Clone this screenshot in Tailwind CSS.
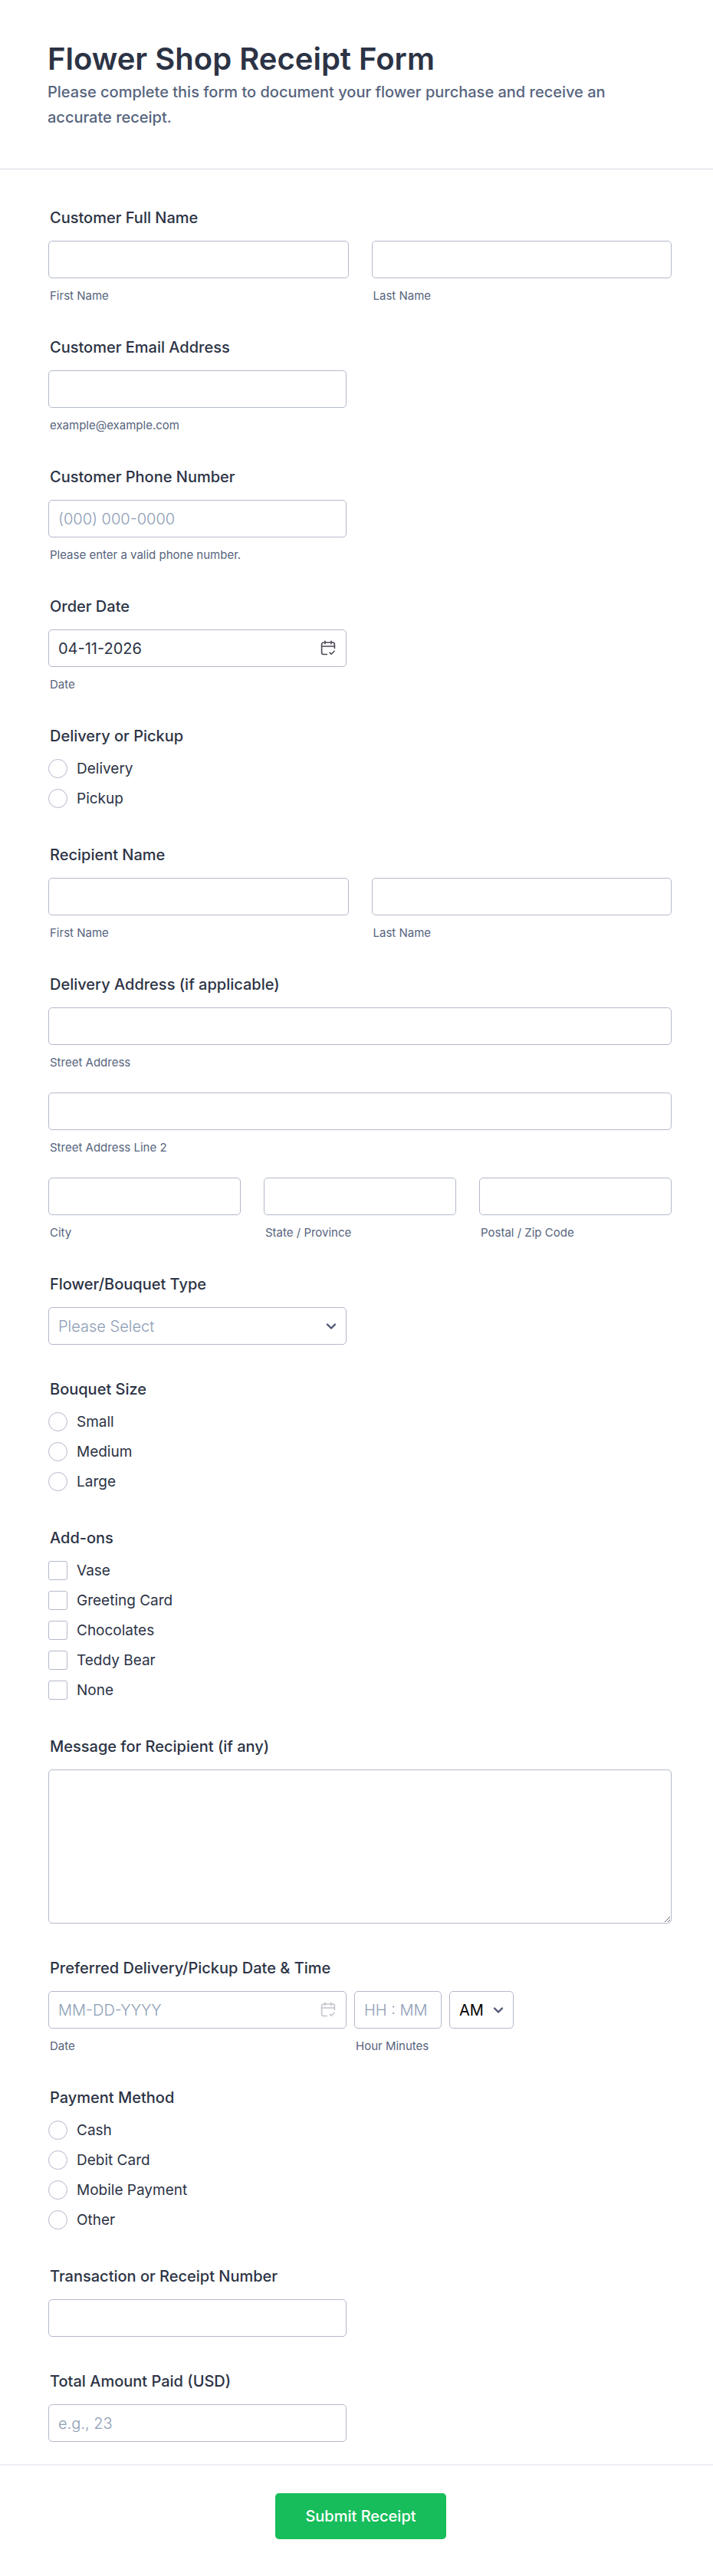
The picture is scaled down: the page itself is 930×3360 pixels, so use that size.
<!DOCTYPE html>
<html lang="en">

<head>
    <meta charset="UTF-8">
    <meta name="viewport" content="width=device-width, initial-scale=1.0">
    <script src="https://cdn.jsdelivr.net/npm/@tailwindcss/browser@4"></script>
    <title>Flower Shop Receipt Form</title>
</head>

<body class="bg-white font-['Inter',sans-serif] text-[#2c3345]">
    <form>
        <header class="border-b border-[#d7d8e1] pt-[52px] pb-[50px] pl-[62px] pr-20">
            <h1 class="text-[40px] leading-[50px] font-semibold">Flower Shop Receipt Form</h1>
            <p class="mt-0.5 text-xl leading-[33px] font-medium text-[#57647e]">Please complete this form to document your flower purchase and receive an accurate receipt.</p>
        </header>

        <div class="flex flex-col gap-[46px] pt-[51px] pb-[29px] pl-[63px] pr-[54px]">
            <!-- Customer name -->
            <fieldset>
                <legend class="mb-[18px] pl-0.5 text-xl leading-6 font-medium">Customer Full Name</legend>
                <div class="grid grid-cols-2 gap-[30px]">
                    <div>
                        <input type="text" id="first-name" class="block w-full h-[49px] px-3 text-xl border border-[#b4b9cc] rounded-[5px]">
                        <label for="first-name" class="block mt-[14px] pl-0.5 text-[15px] leading-[18px] text-[#57647e]">First Name</label>
                    </div>
                    <div>
                        <input type="text" id="last-name" class="block w-full h-[49px] px-3 text-xl border border-[#b4b9cc] rounded-[5px]">
                        <label for="last-name" class="block mt-[14px] pl-0.5 text-[15px] leading-[18px] text-[#57647e]">Last Name</label>
                    </div>
                </div>
            </fieldset>

            <!-- Email -->
            <div>
                <label for="email" class="block mb-[18px] pl-0.5 text-xl leading-6 font-medium">Customer Email Address</label>
                <input type="email" id="email" class="block w-full max-w-[389px] h-[49px] px-3 text-xl border border-[#b4b9cc] rounded-[5px]">
                <label for="email" class="block mt-[14px] pl-0.5 text-[15px] leading-[18px] text-[#57647e]">example@example.com</label>
            </div>

            <!-- Phone -->
            <div>
                <label for="phone" class="block mb-[18px] pl-0.5 text-xl leading-6 font-medium">Customer Phone Number</label>
                <input type="tel" id="phone" placeholder="(000) 000-0000" class="block w-full max-w-[389px] h-[49px] px-3 text-xl border border-[#b4b9cc] rounded-[5px] placeholder:text-[#8d9db5] placeholder:font-light">
                <label for="phone" class="block mt-[14px] pl-0.5 text-[15px] leading-[18px] text-[#57647e]">Please enter a valid phone number.</label>
            </div>

            <!-- Order date -->
            <div>
                <label for="order-date" class="block mb-[18px] pl-0.5 text-xl leading-6 font-medium">Order Date</label>
                <div class="relative max-w-[389px]">
                    <input type="text" id="order-date" value="04-11-2026" class="block w-full h-[49px] px-3 text-xl border border-[#b4b9cc] rounded-[5px]">
                    <svg class="absolute right-[14px] top-[14px] size-[20px] text-[#4f4759]" viewBox="0 0 20 20" fill="none" stroke="currentColor" stroke-width="1.6" stroke-linecap="round" stroke-linejoin="round">
                        <path d="M8.5 18.5H4a2.4 2.4 0 0 1-2.4-2.4V5.4A2.4 2.4 0 0 1 4 3h12a2.4 2.4 0 0 1 2.4 2.4v5.1" />
                        <path d="M1.6 8h16.8M6 1.2v3.6M14 1.2v3.6M12.2 16.4l1.9 1.9 4-4" />
                    </svg>
                </div>
                <label for="order-date" class="block mt-[14px] pl-0.5 text-[15px] leading-[18px] text-[#57647e]">Date</label>
            </div>

            <!-- Delivery or pickup -->
            <fieldset class="pb-[3px]">
                <legend class="mb-[18px] pl-0.5 text-xl leading-6 font-medium">Delivery or Pickup</legend>
                <div class="flex flex-col items-start gap-[14px]">
                    <label class="flex items-center gap-3 text-[19px] leading-[25px]"><input type="radio" name="method" class="appearance-none size-[25px] border border-[#b4b9cc] rounded-full checked:border-8 checked:border-blue-500">Delivery</label>
                    <label class="flex items-center gap-3 text-[19px] leading-[25px]"><input type="radio" name="method" class="appearance-none size-[25px] border border-[#b4b9cc] rounded-full checked:border-8 checked:border-blue-500">Pickup</label>
                </div>
            </fieldset>

            <!-- Recipient -->
            <fieldset>
                <legend class="mb-[18px] pl-0.5 text-xl leading-6 font-medium">Recipient Name</legend>
                <div class="grid grid-cols-2 gap-[30px]">
                    <div>
                        <input type="text" id="recipient-first" class="block w-full h-[49px] px-3 text-xl border border-[#b4b9cc] rounded-[5px]">
                        <label for="recipient-first" class="block mt-[14px] pl-0.5 text-[15px] leading-[18px] text-[#57647e]">First Name</label>
                    </div>
                    <div>
                        <input type="text" id="recipient-last" class="block w-full h-[49px] px-3 text-xl border border-[#b4b9cc] rounded-[5px]">
                        <label for="recipient-last" class="block mt-[14px] pl-0.5 text-[15px] leading-[18px] text-[#57647e]">Last Name</label>
                    </div>
                </div>
            </fieldset>

            <!-- Address -->
            <fieldset>
                <legend class="mb-[18px] pl-0.5 text-xl leading-6 font-medium">Delivery Address (if applicable)</legend>
                <div class="grid grid-cols-3 gap-[30px]">
                    <div class="col-span-3">
                        <input type="text" id="street" class="block w-full h-[49px] px-3 text-xl border border-[#b4b9cc] rounded-[5px]">
                        <label for="street" class="block mt-[14px] pl-0.5 text-[15px] leading-[18px] text-[#57647e]">Street Address</label>
                    </div>
                    <div class="col-span-3">
                        <input type="text" id="street-2" class="block w-full h-[49px] px-3 text-xl border border-[#b4b9cc] rounded-[5px]">
                        <label for="street-2" class="block mt-[14px] pl-0.5 text-[15px] leading-[18px] text-[#57647e]">Street Address Line 2</label>
                    </div>
                    <div>
                        <input type="text" id="city" class="block w-full h-[49px] px-3 text-xl border border-[#b4b9cc] rounded-[5px]">
                        <label for="city" class="block mt-[14px] pl-0.5 text-[15px] leading-[18px] text-[#57647e]">City</label>
                    </div>
                    <div>
                        <input type="text" id="state" class="block w-full h-[49px] px-3 text-xl border border-[#b4b9cc] rounded-[5px]">
                        <label for="state" class="block mt-[14px] pl-0.5 text-[15px] leading-[18px] text-[#57647e]">State / Province</label>
                    </div>
                    <div>
                        <input type="text" id="zip" class="block w-full h-[49px] px-3 text-xl border border-[#b4b9cc] rounded-[5px]">
                        <label for="zip" class="block mt-[14px] pl-0.5 text-[15px] leading-[18px] text-[#57647e]">Postal / Zip Code</label>
                    </div>
                </div>
            </fieldset>

            <!-- Flower type -->
            <div>
                <label for="flower-type" class="block mb-[18px] pl-0.5 text-xl leading-6 font-medium">Flower/Bouquet Type</label>
                <div class="relative max-w-[389px]">
                    <select id="flower-type" class="appearance-none block w-full h-[49px] px-3 text-xl font-light text-[#8d9db5] bg-white border border-[#b4b9cc] rounded-[5px]">
                        <option>Please Select</option>
                    </select>
                    <svg class="absolute right-[13px] top-[20px] w-[14px] h-[10px] text-[#4e5673] pointer-events-none" viewBox="0 0 14 10" fill="none" stroke="currentColor" stroke-width="2.4" stroke-linecap="round" stroke-linejoin="round">
                        <path d="M2 2.5l5 5 5-5" />
                    </svg>
                </div>
            </div>

            <!-- Bouquet size -->
            <fieldset class="pb-[3px]">
                <legend class="mb-[18px] pl-0.5 text-xl leading-6 font-medium">Bouquet Size</legend>
                <div class="flex flex-col items-start gap-[14px]">
                    <label class="flex items-center gap-3 text-[19px] leading-[25px]"><input type="radio" name="size" class="appearance-none size-[25px] border border-[#b4b9cc] rounded-full checked:border-8 checked:border-blue-500">Small</label>
                    <label class="flex items-center gap-3 text-[19px] leading-[25px]"><input type="radio" name="size" class="appearance-none size-[25px] border border-[#b4b9cc] rounded-full checked:border-8 checked:border-blue-500">Medium</label>
                    <label class="flex items-center gap-3 text-[19px] leading-[25px]"><input type="radio" name="size" class="appearance-none size-[25px] border border-[#b4b9cc] rounded-full checked:border-8 checked:border-blue-500">Large</label>
                </div>
            </fieldset>

            <!-- Add-ons -->
            <fieldset class="pb-[3px]">
                <legend class="mb-[18px] pl-0.5 text-xl leading-6 font-medium">Add-ons</legend>
                <div class="flex flex-col items-start gap-[14px]">
                    <label class="flex items-center gap-3 text-[19px] leading-[25px]"><input type="checkbox" class="appearance-none size-[25px] border border-[#b4b9cc] rounded-[3px] checked:bg-blue-500">Vase</label>
                    <label class="flex items-center gap-3 text-[19px] leading-[25px]"><input type="checkbox" class="appearance-none size-[25px] border border-[#b4b9cc] rounded-[3px] checked:bg-blue-500">Greeting Card</label>
                    <label class="flex items-center gap-3 text-[19px] leading-[25px]"><input type="checkbox" class="appearance-none size-[25px] border border-[#b4b9cc] rounded-[3px] checked:bg-blue-500">Chocolates</label>
                    <label class="flex items-center gap-3 text-[19px] leading-[25px]"><input type="checkbox" class="appearance-none size-[25px] border border-[#b4b9cc] rounded-[3px] checked:bg-blue-500">Teddy Bear</label>
                    <label class="flex items-center gap-3 text-[19px] leading-[25px]"><input type="checkbox" class="appearance-none size-[25px] border border-[#b4b9cc] rounded-[3px] checked:bg-blue-500">None</label>
                </div>
            </fieldset>

            <!-- Message -->
            <div>
                <label for="message" class="block mb-[18px] pl-0.5 text-xl leading-6 font-medium">Message for Recipient (if any)</label>
                <textarea id="message" class="block w-full h-[201px] p-3 text-xl border border-[#b4b9cc] rounded-[5px]"></textarea>
            </div>

            <!-- Preferred date and time -->
            <fieldset>
                <legend class="mb-[18px] pl-0.5 text-xl leading-6 font-medium">Preferred Delivery/Pickup Date &amp; Time</legend>
                <div class="flex items-start gap-[10px]">
                    <div class="w-full max-w-[389px]">
                        <div class="relative">
                            <input type="text" id="preferred-date" placeholder="MM-DD-YYYY" class="block w-full h-[49px] px-3 text-xl border border-[#b4b9cc] rounded-[5px] placeholder:text-[#8d9db5] placeholder:font-light">
                            <svg class="absolute right-[14px] top-[14px] size-[20px] text-[#c4c4cc]" viewBox="0 0 20 20" fill="none" stroke="currentColor" stroke-width="1.6" stroke-linecap="round" stroke-linejoin="round">
                                <path d="M8.5 18.5H4a2.4 2.4 0 0 1-2.4-2.4V5.4A2.4 2.4 0 0 1 4 3h12a2.4 2.4 0 0 1 2.4 2.4v5.1" />
                                <path d="M1.6 8h16.8M6 1.2v3.6M14 1.2v3.6M12.2 16.4l1.9 1.9 4-4" />
                            </svg>
                        </div>
                        <label for="preferred-date" class="block mt-[14px] pl-0.5 text-[15px] leading-[18px] text-[#57647e]">Date</label>
                    </div>
                    <div class="w-[114px] shrink-0">
                        <input type="text" id="preferred-time" placeholder="HH : MM" class="block w-full h-[49px] px-3 text-xl border border-[#b4b9cc] rounded-[5px] placeholder:text-[#8d9db5] placeholder:font-light">
                        <label for="preferred-time" class="block mt-[14px] pl-0.5 text-[15px] leading-[18px] text-[#57647e]">Hour Minutes</label>
                    </div>
                    <div class="relative w-[84px] shrink-0">
                        <select aria-label="AM or PM" class="appearance-none block w-full h-[49px] px-3 text-xl text-black bg-white border border-[#b4b9cc] rounded-[5px]">
                            <option>AM</option>
                            <option>PM</option>
                        </select>
                        <svg class="absolute right-[13px] top-[20px] w-[14px] h-[10px] text-[#4e5673] pointer-events-none" viewBox="0 0 14 10" fill="none" stroke="currentColor" stroke-width="2.4" stroke-linecap="round" stroke-linejoin="round">
                            <path d="M2 2.5l5 5 5-5" />
                        </svg>
                    </div>
                </div>
            </fieldset>

            <!-- Payment -->
            <fieldset class="pb-[3px]">
                <legend class="mb-[18px] pl-0.5 text-xl leading-6 font-medium">Payment Method</legend>
                <div class="flex flex-col items-start gap-[14px]">
                    <label class="flex items-center gap-3 text-[19px] leading-[25px]"><input type="radio" name="payment" class="appearance-none size-[25px] border border-[#b4b9cc] rounded-full checked:border-8 checked:border-blue-500">Cash</label>
                    <label class="flex items-center gap-3 text-[19px] leading-[25px]"><input type="radio" name="payment" class="appearance-none size-[25px] border border-[#b4b9cc] rounded-full checked:border-8 checked:border-blue-500">Debit Card</label>
                    <label class="flex items-center gap-3 text-[19px] leading-[25px]"><input type="radio" name="payment" class="appearance-none size-[25px] border border-[#b4b9cc] rounded-full checked:border-8 checked:border-blue-500">Mobile Payment</label>
                    <label class="flex items-center gap-3 text-[19px] leading-[25px]"><input type="radio" name="payment" class="appearance-none size-[25px] border border-[#b4b9cc] rounded-full checked:border-8 checked:border-blue-500">Other</label>
                </div>
            </fieldset>

            <div>
                <label for="transaction" class="block mb-[18px] pl-0.5 text-xl leading-6 font-medium">Transaction or Receipt Number</label>
                <input type="text" id="transaction" class="block w-full max-w-[389px] h-[49px] px-3 text-xl border border-[#b4b9cc] rounded-[5px]">
            </div>

            <div>
                <label for="total" class="block mb-[18px] pl-0.5 text-xl leading-6 font-medium">Total Amount Paid (USD)</label>
                <input type="text" id="total" placeholder="e.g., 23" class="block w-full max-w-[389px] h-[49px] px-3 text-xl border border-[#b4b9cc] rounded-[5px] placeholder:text-[#8d9db5] placeholder:font-light">
            </div>
        </div>

        <footer class="flex justify-center border-t-2 border-[#eff0f6] pt-9 pb-12 pl-[63px] pr-[52px]">
            <button type="submit" class="h-[60px] px-[39px] text-xl font-medium text-white bg-[#18bd5b] hover:bg-[#16aa52] rounded-[5px]">Submit Receipt</button>
        </footer>
    </form>
</body>

</html>
